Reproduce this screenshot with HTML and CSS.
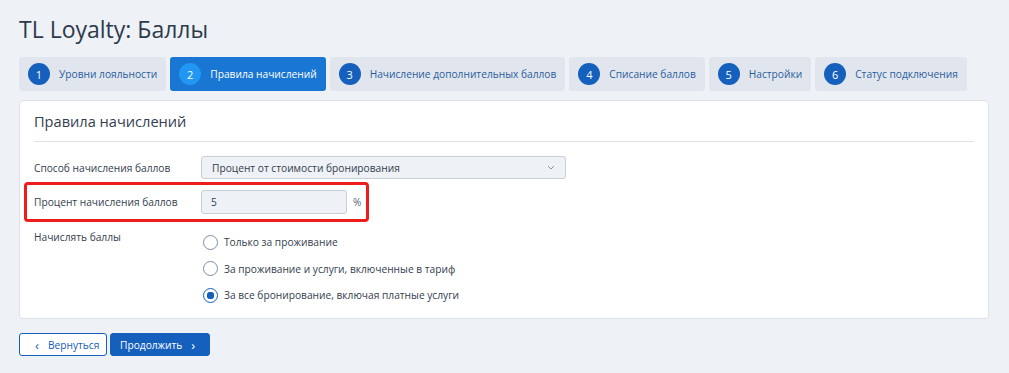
FILE: index.html
```html
<!DOCTYPE html>
<html lang="ru">
<head>
    <meta charset="UTF-8">
    <title>TL Loyalty: Баллы</title>
    <link rel="stylesheet" href="styles.css">
</head>
<body>
    <h1 class="page-title">TL Loyalty: Баллы</h1>

    <div class="steps">
        <div class="step"><span class="num">1</span>Уровни лояльности</div>
        <div class="step active"><span class="num">2</span>Правила начислений</div>
        <div class="step"><span class="num">3</span>Начисление дополнительных баллов</div>
        <div class="step"><span class="num">4</span>Списание баллов</div>
        <div class="step"><span class="num">5</span>Настройки</div>
        <div class="step"><span class="num">6</span>Статус подключения</div>
    </div>

    <div class="card">
        <h2 class="card-title">Правила начислений</h2>

        <div class="row">
            <label class="label">Способ начисления баллов</label>
            <div class="select">
                <span>Процент от стоимости бронирования</span>
                <svg width="8" height="5" viewBox="0 0 8 5"><path d="M1 1l3 3 3-3" fill="none" stroke="#8a96a6" stroke-width="1"/></svg>
            </div>
        </div>

        <div class="row highlight">
            <label class="label">Процент начисления баллов</label>
            <div class="input">5</div>
            <span class="unit">%</span>
        </div>

        <div class="row top">
            <label class="label">Начислять баллы</label>
            <div class="radios">
                <div class="radio"><span class="dot"></span>Только за проживание</div>
                <div class="radio"><span class="dot"></span>За проживание и услуги, включенные в тариф</div>
                <div class="radio checked"><span class="dot"></span>За все бронирование, включая платные услуги</div>
            </div>
        </div>
    </div>

    <div class="actions">
        <button class="btn outline"><span class="arr">&#8249;</span>Вернуться</button>
        <button class="btn primary">Продолжить<span class="arr">&#8250;</span></button>
    </div>
</body>
</html>
```

FILE: styles.css
```css
body {
    margin: 0;
    padding: 11px 20px 0 19px;
    background-color: #eef1f5;
    font-family: "Open Sans", "Noto Sans", sans-serif;
    color: #333e4e;
    white-space: nowrap;
}

.page-title {
    margin: 0 0 10px;
    font-size: 23px;
    font-weight: 400;
    line-height: 36px;
    color: #2c3a4b;
}

.steps {
    display: flex;
    gap: 4px;
    margin-bottom: 9px;
}

.step {
    display: flex;
    align-items: center;
    height: 34px;
    padding: 0 9px;
    background-color: #e1e6ee;
    border-radius: 3px;
    font-size: 10.2px;
    color: #2b5d9c;
}

.step .num {
    width: 22px;
    height: 22px;
    margin-right: 9px;
    border-radius: 50%;
    background-color: #1560bd;
    color: #fff;
    font-size: 11px;
    display: flex;
    align-items: center;
    justify-content: center;
}

.step.active {
    background-color: #1976d2;
    color: #fff;
}

.step.active .num {
    background-color: #2196f3;
}

.card {
    background-color: #fff;
    border: 1px solid #dde2ea;
    border-radius: 4px;
    padding: 0 14px 15px;
}

.card-title {
    margin: 0 0 14px;
    padding: 9px 0 9px;
    font-size: 14.6px;
    font-weight: 400;
    line-height: 22px;
    color: #333e4e;
    border-bottom: 1px solid #dde2ea;
}

.row {
    display: flex;
    align-items: center;
    font-size: 10.2px;
    margin-bottom: 3px;
}

.row.top {
    align-items: flex-start;
    margin: 8px 0 0;
}

.label {
    width: 167px;
}

.select {
    width: 343px;
    height: 21px;
    padding: 0 10px;
    display: flex;
    align-items: center;
    justify-content: space-between;
    background-color: #eef1f5;
    border: 1px solid #c8cfd9;
    border-radius: 3px;
}

.highlight {
    margin-left: -10px;
    padding: 5px 0 5px 7px;
    width: 332px;
    border: 3px solid #ee1c1c;
    border-radius: 4px;
}

.input {
    width: 135px;
    height: 22px;
    padding: 0 0 0 9px;
    display: flex;
    align-items: center;
    background-color: #eef1f5;
    border: 1px solid #c8cfd9;
    border-radius: 3px;
}

.unit {
    margin-left: 6px;
    font-size: 10px;
    color: #5a6677;
}

.radios {
    display: flex;
    flex-direction: column;
    gap: 10.5px;
    margin-top: 4px;
}

.radio {
    display: flex;
    align-items: center;
    height: 16px;
}

.radio .dot {
    box-sizing: border-box;
    width: 15px;
    height: 15px;
    margin: 0 6px 0 2px;
    border: 1.5px solid #7d8da3;
    border-radius: 50%;
    background: #fff;
}

.radio.checked .dot {
    border-color: #1560bd;
    background: radial-gradient(circle, #1560bd 0 3.5px, #fff 4px);
}

.actions {
    display: flex;
    gap: 3px;
    margin-top: 14px;
}

.btn {
    height: 23px;
    padding: 0 9px;
    font-family: inherit;
    font-size: 10.2px;
    border-radius: 3px;
    display: flex;
    align-items: center;
    cursor: pointer;
}

.btn.outline {
    width: 88px;
    background-color: #fff;
    border: 1px solid #1560bd;
    color: #1560bd;
    padding-left: 15px;
}

.btn.outline .arr {
    margin-right: 9px;
    font-size: 13px;
}

.btn.primary {
    width: 100px;
    background-color: #1560bd;
    border: 1px solid #1560bd;
    color: #fff;
}

.btn.primary .arr {
    margin-left: 9px;
    font-size: 13px;
}
```
